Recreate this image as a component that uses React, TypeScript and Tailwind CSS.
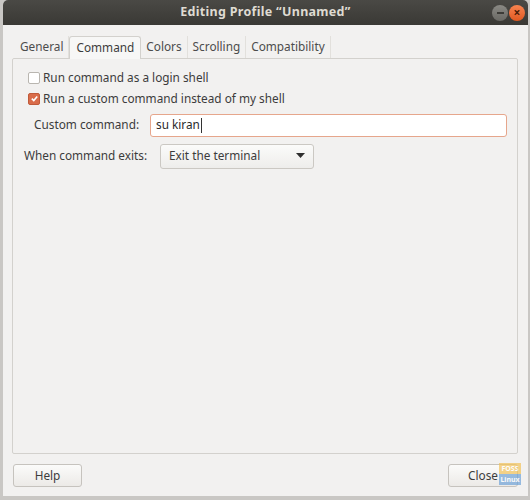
const tabs = ["General", "Command", "Colors", "Scrolling", "Compatibility"];

function TitleBar() {
  return (
    <div className="relative h-[25px] flex items-center justify-center bg-gradient-to-b from-[#4a4945] to-[#3a3935] text-[#dfdbd2] text-[12.5px] font-bold tracking-[0.3px]">
      Editing Profile “Unnamed”
      <div className="absolute right-[3px] top-[5px] flex items-center gap-[1px]">
        <div className="w-[16px] h-[16px] rounded-full bg-gradient-to-b from-[#8a8984] to-[#6a6964] flex items-center justify-center">
          <div className="w-[7px] h-[2px] bg-[#3c3b37]" />
        </div>
        <div className="w-[16px] h-[16px] rounded-full bg-gradient-to-b from-[#f7834f] to-[#e0581f] flex items-center justify-center text-[#4a1c08] text-[12px] font-bold leading-none">
          ×
        </div>
      </div>
    </div>
  );
}

function Checkbox({ checked }: { checked?: boolean }) {
  if (checked) {
    return (
      <div className="w-[12px] h-[12px] rounded-[2px] bg-[#d96c4a] border border-[#c05a3a] flex items-center justify-center">
        <svg width="9" height="9" viewBox="0 0 10 10">
          <path d="M2 5.2 L4.2 7.3 L8 2.8" stroke="#fff" strokeWidth="1.8" fill="none" />
        </svg>
      </div>
    );
  }
  return <div className="w-[12px] h-[12px] rounded-[2px] bg-white border border-[#b9b6b0]" />;
}

export default function App() {
  return (
    <div
      className="w-[530px] h-[500px] bg-[#c9c7c4] pl-[3px] pr-[2px] pb-[4px] flex flex-col text-[#3c3c3c] text-[11.8px]"
      style={{ fontFamily: '"Noto Sans", "Open Sans", sans-serif' }}
    >
      <div className="flex-1 flex flex-col bg-[#f2f1f0] rounded-t-[5px] overflow-hidden">
        <TitleBar />
        <div className="flex-1 flex flex-col pl-[9px] pr-[10px] pt-[11px]">
          {/* notebook tabs */}
          <div className="flex items-end h-[22px] pl-[3px]">
            {tabs.map((t) => (
              <div
                key={t}
                className={
                  t === "Command"
                    ? "h-[23px] px-[6px] flex items-center bg-[#f7f7f6] border border-b-0 border-[#d3d1cd] rounded-t-[3px] -mb-px relative z-10"
                    : "h-[22px] px-[5px] flex items-center text-[#4c4c4c] border-r border-[#e2e0dc]"
                }
              >
                {t}
              </div>
            ))}
          </div>

          <div className="h-[396px] border border-[#d3d1cd] rounded-[2px] bg-[#f2f1f0] flex flex-col pt-[8px] pl-[15px] pr-[10px]">
            <label className="flex items-center gap-[3px] h-[21px]">
              <Checkbox />
              <span>Run command as a login shell</span>
            </label>
            <label className="flex items-center gap-[3px] h-[21px]">
              <Checkbox checked />
              <span>Run a custom command instead of my shell</span>
            </label>
            <div className="flex items-center h-[24px] mt-[4px]">
              <span className="w-[122px] pl-[6px] whitespace-nowrap">Custom command:</span>
              <div className="flex-1 h-[23px] bg-white border border-[#e6a68c] rounded-[3px] flex items-center px-[5px] text-[#2a2a2a]">
                su kiran<span className="w-px h-[15px] bg-[#333] ml-[1px]" />
              </div>
            </div>
            <div className="flex items-center h-[26px] mt-[6px]">
              <span className="w-[136px] -ml-[4px] whitespace-nowrap">When command exits:</span>
              <div className="w-[154px] h-[25px] bg-gradient-to-b from-[#fbfbfa] to-[#eeedeb] border border-[#cbc8c3] rounded-[3px] flex items-center justify-between px-[8px] text-[#3c3c3c]">
                <span>Exit the terminal</span>
                <svg width="9" height="6" viewBox="0 0 9 6">
                  <path d="M0 0 H9 L4.5 5 Z" fill="#2f2f2f" />
                </svg>
              </div>
            </div>
          </div>

          {/* dialog buttons */}
          <div className="flex items-center justify-between pt-[10px] pb-[9px] pl-[1px]">
            <button className="w-[69px] h-[23px] rounded-[3px] border border-[#c6c3be] bg-gradient-to-b from-[#fbfbfa] to-[#eceae7] text-[#3c3c3c]">
              Help
            </button>
            <div className="relative">
              <button className="w-[70px] h-[23px] rounded-[3px] border border-[#c6c3be] bg-gradient-to-b from-[#fbfbfa] to-[#eceae7] text-[#3c3c3c]">
                Close
              </button>
              <div className="absolute right-[-3px] top-[-1px] w-[22px] flex flex-col text-[7px] leading-[11px] font-bold text-white text-center opacity-70">
                <span className="bg-[#f3c35a]">FOSS</span>
                <span className="bg-[#6fa3d8]">Linux</span>
              </div>
            </div>
          </div>
        </div>
      </div>
    </div>
  );
}
